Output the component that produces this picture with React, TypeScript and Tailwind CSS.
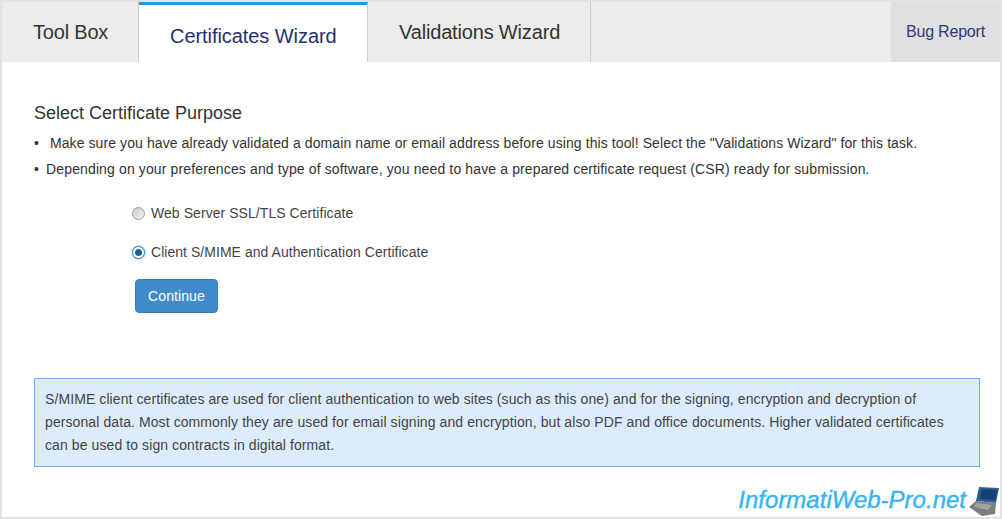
const font = { fontFamily: '"Liberation Sans", Arial, sans-serif' };

const Radio = ({ checked }: { checked?: boolean }) => (
  <span
    className={
      checked
        ? "flex h-[13px] w-[13px] items-center justify-center rounded-full border border-[#3b7fb8] bg-white shadow-[0_0_3px_#5aa6e0]"
        : "h-[13px] w-[13px] rounded-full border border-[#a0a0a0] bg-gradient-to-br from-[#c8c8c8] to-[#f4f4f4]"
    }
  >
    {checked && <span className="h-[7px] w-[7px] rounded-full bg-[#1c5f9a]" />}
  </span>
);

const LaptopIcon = () => (
  <svg width="32" height="31" viewBox="0 0 32 31">
    <path d="M11 1 L31 2 L28 17 L8 15 Z" fill="#2a5f9c" />
    <path d="M14 3 L29 4 L27 14 L12 13 Z" fill="#183d70" />
    <path d="M8 15 L28 17 L27 28 L14 30 L1 21 Z" fill="#7d7d7d" />
    <path d="M8 17 L24 19 L20 24 L6 21 Z" fill="#a3a3a3" />
  </svg>
);

export default function App() {
  return (
    <div className="h-[519px] w-[1002px] overflow-hidden bg-[#e3e3e3] pb-[2px] pr-[2px] pl-[2px] pt-[2px]" style={font}>
      <div className="relative h-[515px] bg-white">
        <div className="flex h-[60px] bg-[#ececec]">
          <div className="w-[137px] border-r border-[#cfcfcf] pl-[31px] pt-[16px] text-[20px] leading-[28px] tracking-[-0.2px] text-[#333]">
            Tool Box
          </div>
          <div className="w-[229px] border-t-[3px] border-r border-t-[#1f9ddb] border-r-[#cfcfcf] bg-white pl-[31px] pt-[17px] text-[20px] leading-[28px] tracking-[-0.06px] text-[#26306e]">
            Certificates Wizard
          </div>
          <div className="w-[223px] border-r border-[#cfcfcf] pl-[31px] pt-[16px] text-[20px] leading-[28px] tracking-[-0.17px] text-[#333]">
            Validations Wizard
          </div>
          <div className="flex-1" />
          <div className="w-[109px] bg-[#e0e0e0] pl-[15px] pt-[20px] text-[16px] leading-[20px] tracking-[-0.2px] text-[#2c3a78]">
            Bug Report
          </div>
        </div>

        <div className="px-[32px] text-[14px] tracking-[0.09px] text-[#333]">
          <h2 className="mt-[40px] text-[18px] leading-[22px] font-normal tracking-normal">Select Certificate Purpose</h2>
          <p className="mt-[9px] whitespace-pre leading-[20px]">
            <span className="mr-[3px]">{"•  "}</span>
            Make sure you have already validated a domain name or email address before using this tool! Select the "Validations Wizard" for this task.
          </p>
          <p className="mt-[6px] leading-[20px] tracking-[0.13px]">
            <span className="mr-[3px]">• </span>
            Depending on your preferences and type of software, you need to have a prepared certificate request (CSR) ready for submission.
          </p>

          <div className="ml-[98px] mt-[24px] flex items-center gap-[6px] leading-[20px] tracking-[0.06px] text-[#444]">
            <Radio />
            <span>Web Server SSL/TLS Certificate</span>
          </div>
          <div className="ml-[98px] mt-[19px] flex items-center gap-[6px] leading-[20px] tracking-[0.04px] text-[#444]">
            <Radio checked />
            <span>Client S/MIME and Authentication Certificate</span>
          </div>
          <button className="ml-[101px] mt-[17px] block h-[34px] w-[83px] rounded-[4px] border border-[#357ebd] bg-[#428bca] text-center text-[14px] text-white">
            Continue
          </button>

          <div className="mt-[65px] h-[89px] w-[946px] border border-[#6fb0f5] bg-[#dcecfc] px-[10px] pt-[9px] text-[14px] leading-[23px] text-[#444]">
            S/MIME client certificates are used for client authentication to web sites (such as this one) and for the signing, encryption and decryption of
            <br />
            personal data. Most commonly they are used for email signing and encryption, but also PDF and office documents. Higher validated certificates
            <br />
            can be used to sign contracts in digital format.
          </div>
        </div>

        <div className="absolute bottom-0 right-0 flex items-end gap-[2px]">
          <span className="pb-[2px] text-[24px] leading-[30px] italic text-[#35b4f4] [-webkit-text-stroke:0.4px_#35b4f4]" style={font}>
            InformatiWeb-Pro.net
          </span>
          <LaptopIcon />
        </div>
      </div>
    </div>
  );
}
